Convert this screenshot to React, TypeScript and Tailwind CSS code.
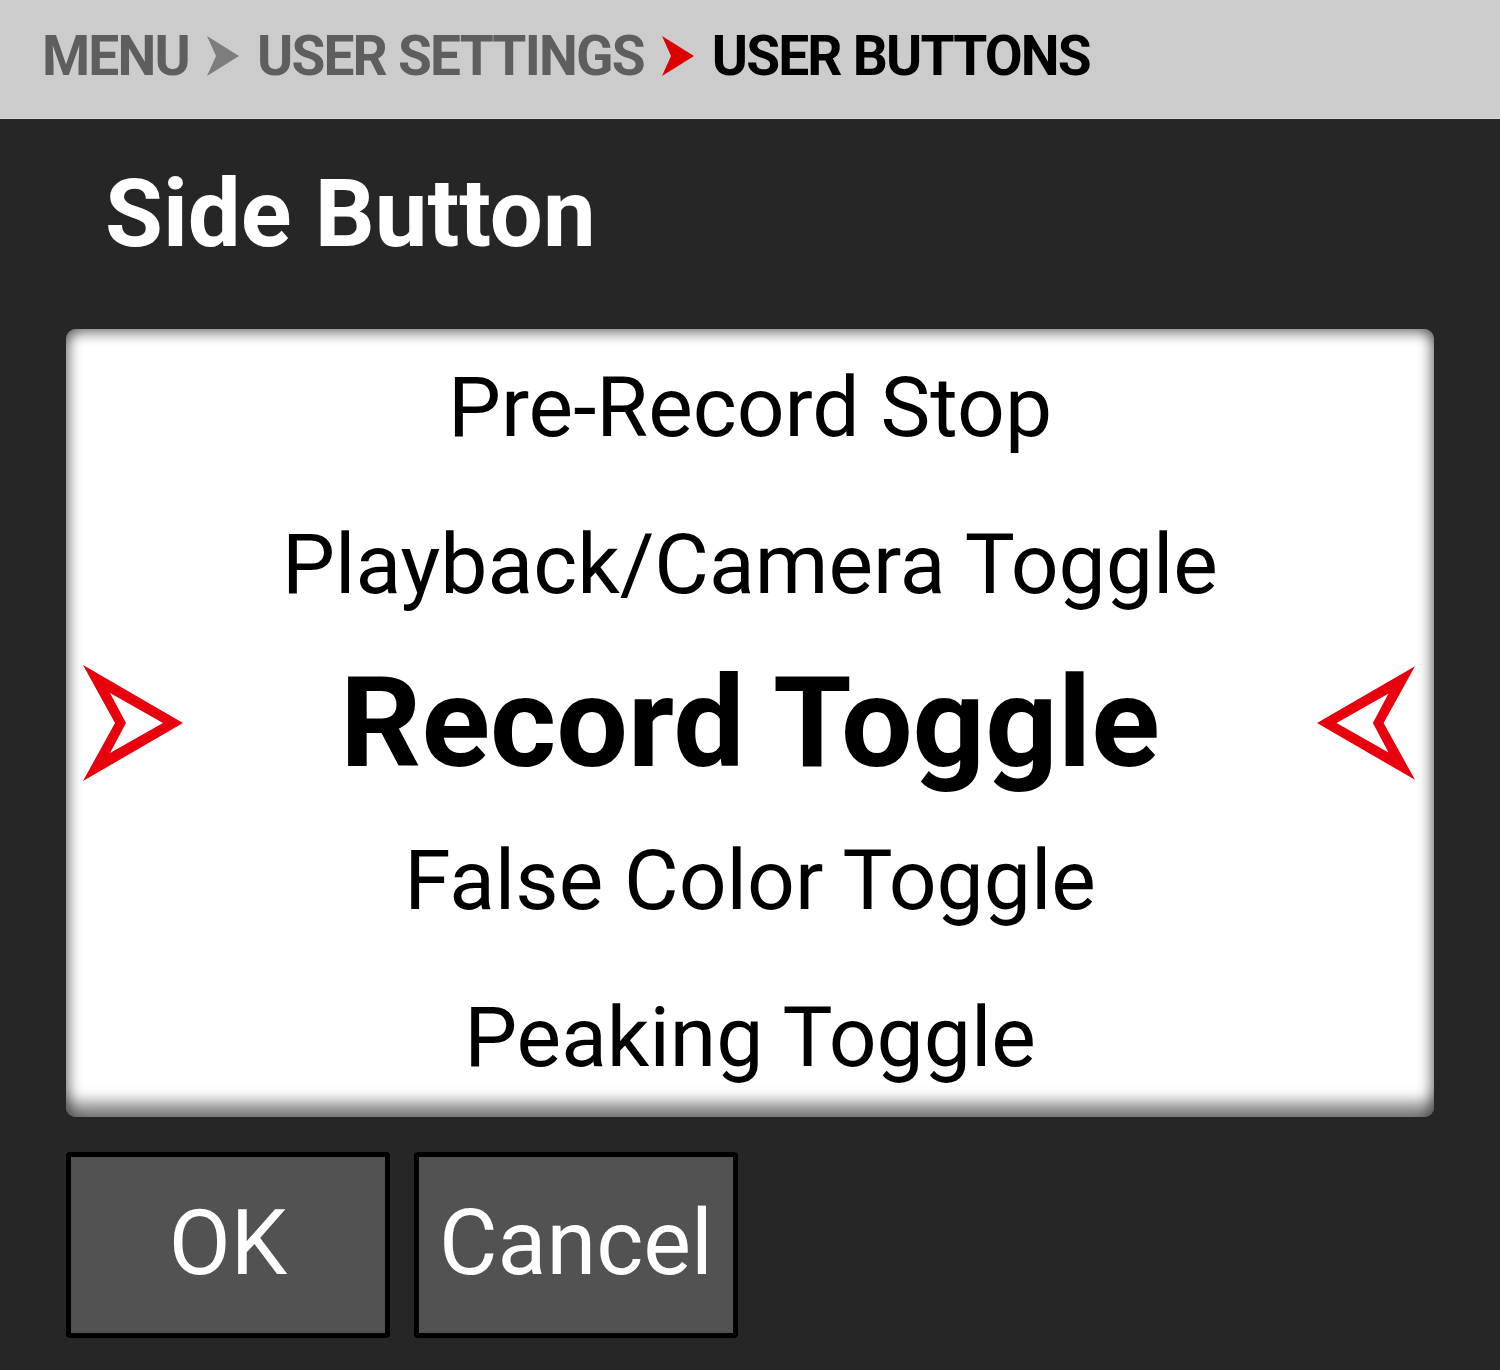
import React from "react";

const font = { fontFamily: "Roboto, 'Liberation Sans', sans-serif" };

function Chevron({ color }: { color: string }) {
  return (
    <svg width="32" height="40" viewBox="0 0 32 40" className="shrink-0">
      <polygon points="0,0 32,20 0,40 9,20" fill={color} />
    </svg>
  );
}

function BigArrow({ flip }: { flip?: boolean }) {
  return (
    <svg
      width="100"
      height="116"
      viewBox="0 0 100 116"
      className={flip ? "-scale-x-100" : ""}
    >
      <path
        fillRule="evenodd"
        d="M0 0 L100 58 L0 116 L32 58 Z M27 28 L43 58 L27 88 L80 58 Z"
        fill="#e8000f"
      />
    </svg>
  );
}

export default function App() {
  const items = [
    "Pre-Record Stop",
    "Playback/Camera Toggle",
    "Record Toggle",
    "False Color Toggle",
    "Peaking Toggle",
  ];
  return (
    <div className="w-[1500px] h-[1370px] bg-[#262626] flex flex-col" style={font}>
      <div className="h-[119px] bg-[#cccccc] border-b border-[#dadada] flex items-center pl-[42px] gap-[18px] pb-[6px]">
        <span className="text-[55px] font-bold text-[#5e5e5e] leading-none tracking-[-1.8px]">MENU</span>
        <Chevron color="#7d7d7d" />
        <span className="text-[55px] font-bold text-[#5e5e5e] leading-none tracking-[-1.8px]">USER SETTINGS</span>
        <Chevron color="#dd0000" />
        <span className="text-[55px] font-bold text-black leading-none tracking-[-1.8px]">USER BUTTONS</span>
      </div>
      <div className="h-[210px] flex items-center pl-[105px] pb-[20px]">
        <span className="text-[94px] font-bold text-white leading-none">Side Button</span>
      </div>
      <div className="mx-[66px] h-[788px] bg-white rounded-[10px] flex flex-col justify-center shadow-[inset_0_10px_12px_-4px_rgba(0,0,0,0.4),inset_0_-22px_16px_-8px_rgba(0,0,0,0.5),inset_12px_0_12px_-6px_rgba(0,0,0,0.3),inset_-12px_0_12px_-6px_rgba(0,0,0,0.3)]">
        {items.map((t, i) =>
          i === 2 ? (
            <div key={t} className="h-[158px] grid grid-cols-[117px_1fr_117px] items-center">
              <div className="pl-[17px] flex">
                <BigArrow />
              </div>
              <div className="text-center text-[127px] font-bold text-black leading-none pb-[2px]">{t}</div>
              <div className="pr-[19px] flex justify-end">
                <BigArrow flip />
              </div>
            </div>
          ) : (
            <div key={t} className="h-[158px] flex items-center justify-center">
              <span className="text-[84px] text-black leading-none">{t}</span>
            </div>
          )
        )}
      </div>
      <div className="flex gap-[24px] pl-[66px] mt-[35px]">
        {["OK", "Cancel"].map((b) => (
          <div
            key={b}
            className="w-[324px] h-[186px] bg-[#525252] border-[5px] border-black rounded-[4px] flex items-center justify-center"
          >
            <span className="text-[90px] text-white leading-none pb-[2px]">{b}</span>
          </div>
        ))}
      </div>
    </div>
  );
}
